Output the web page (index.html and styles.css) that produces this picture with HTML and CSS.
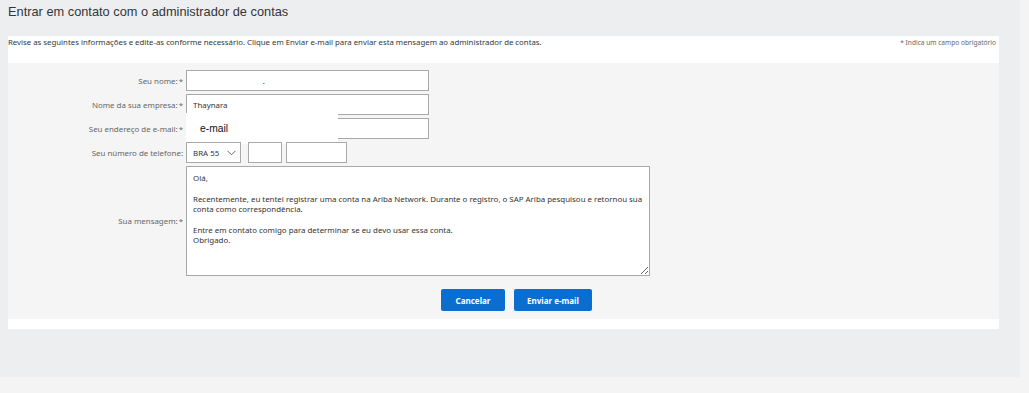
FILE: index.html
```html
<!DOCTYPE html>
<html lang="pt">
<head>
  <meta charset="UTF-8">
  <title>Entrar em contato com o administrador de contas</title>
  <link rel="stylesheet" href="styles.css">
</head>
<body>
  <div class="page">
    <h1 class="title">Entrar em contato com o administrador de contas</h1>

    <div class="panel">
      <div class="intro">
        <span>Revise as seguintes informações e edite-as conforme necessário. Clique em Enviar e-mail para enviar esta mensagem ao administrador de contas.</span>
        <span class="req-note">* Indica um campo obrigatório</span>
      </div>

      <div class="form">
        <div class="row">
          <label class="lbl">Seu nome:<span class="star">*</span></label>
          <div class="field"><input class="inp" type="text" value="                                  ."></div>
        </div>
        <div class="row">
          <label class="lbl">Nome da sua empresa:<span class="star">*</span></label>
          <div class="field"><input class="inp" type="text" value="Thaynara"></div>
        </div>
        <div class="row">
          <label class="lbl">Seu endereço de e-mail:<span class="star">*</span></label>
          <div class="field">
            <input class="inp" type="text" value="">
            <div class="suggest">e-mail</div>
          </div>
        </div>
        <div class="row">
          <label class="lbl">Seu número de telefone:</label>
          <div class="field phone">
            <div class="country">BRA 55
              <svg width="9" height="6" viewBox="0 0 9 6"><path d="M0.5 0.8l4 4 4-4" fill="none" stroke="#666" stroke-width="1"/></svg>
            </div>
            <input class="inp area" type="text">
            <input class="inp num" type="text">
          </div>
        </div>
        <div class="row msg-row">
          <label class="lbl">Sua mensagem:<span class="star">*</span></label>
          <div class="field">
            <textarea class="msg">Olá,

Recentemente, eu tentei registrar uma conta na Ariba Network. Durante o registro, o SAP Ariba pesquisou e retornou sua conta como correspondência.

Entre em contato comigo para determinar se eu devo usar essa conta.
Obrigado.</textarea>
          </div>
        </div>
        <div class="actions">
          <button class="btn cancel">Cancelar</button>
          <button class="btn send">Enviar e-mail</button>
        </div>
      </div>
    </div>
  </div>
</body>
</html>
```

FILE: styles.css
```css
html, body {
  margin: 0;
  padding: 0;
  background-color: #f4f4f4;
}

body {
  font-family: "Noto Sans", "Open Sans", sans-serif;
  color: #333;
}

.page {
  width: 1020px;
  height: 377px;
  background-color: #edeef0;
  padding: 0 0 0 8px;
  box-sizing: border-box;
  overflow: hidden;
}

.title {
  margin: 0;
  padding-top: 4px;
  height: 36px;
  box-sizing: border-box;
  font-family: "Liberation Sans", Arial, sans-serif;
  font-weight: normal;
  font-size: 12.8px;
  color: #32363a;
}

.panel {
  width: 991px;
  background-color: #fff;
  padding-bottom: 10px;
}

.intro {
  display: flex;
  justify-content: space-between;
  height: 27px;
  padding: 1px 3px 0 0;
  box-sizing: border-box;
  font-size: 7.8px;
  color: #32363a;
}

.req-note {
  font-size: 6.6px;
  color: #666;
  padding-top: 1px;
}

.form {
  background-color: #f5f5f5;
  padding: 7px 0 8px;
}

.row {
  display: flex;
  align-items: center;
  margin-bottom: 3px;
}

.lbl {
  width: 175px;
  text-align: right;
  padding-right: 3px;
  font-size: 7.9px;
  color: #666;
}

.star {
  margin-left: 1px;
}

.field {
  position: relative;
  display: flex;
}

.inp {
  width: 243px;
  height: 21px;
  box-sizing: border-box;
  border: 1px solid #a9a9a9;
  background-color: #fff;
  padding: 0 6px;
  font-family: "Noto Sans", "Open Sans", sans-serif;
  font-size: 7.9px;
  color: #333;
  outline: none;
}

.suggest {
  position: absolute;
  left: 0;
  top: 0;
  width: 152px;
  height: 31px;
  margin-top: -5px;
  background-color: #fff;
  padding: 10px 0 0 14px;
  box-sizing: border-box;
  font-family: "Liberation Sans", Arial, sans-serif;
  font-size: 10.3px;
  color: #111;
}

.phone {
  gap: 4px;
}

.country {
  display: flex;
  align-items: center;
  justify-content: space-between;
  width: 55px;
  height: 21px;
  box-sizing: border-box;
  border: 1px solid #a9a9a9;
  background-color: #fff;
  padding: 0 4px 0 6px;
  margin-right: 3px;
  font-size: 7.9px;
  color: #333;
}

.inp.area {
  width: 34px;
}

.inp.num {
  width: 61px;
}

.msg {
  width: 464px;
  height: 110px;
  box-sizing: border-box;
  border: 1px solid #a9a9a9;
  background-color: #fff;
  padding: 6px 6px;
  margin: 0;
  font-family: "Noto Sans", "Open Sans", sans-serif;
  font-size: 7.9px;
  line-height: 10.4px;
  color: #333;
  resize: both;
  outline: none;
}

.actions {
  display: flex;
  gap: 9px;
  padding-left: 433px;
  margin-top: 13px;
}

.btn {
  height: 22px;
  border: none;
  border-radius: 2px;
  background-color: #0a6ed1;
  color: #fff;
  font-family: "Noto Sans", "Open Sans", sans-serif;
  font-size: 8px;
  font-weight: bold;
  cursor: pointer;
}

.btn.cancel {
  width: 64px;
}

.btn.send {
  width: 78px;
}

.btn:hover {
  background-color: #085caf;
}
```
